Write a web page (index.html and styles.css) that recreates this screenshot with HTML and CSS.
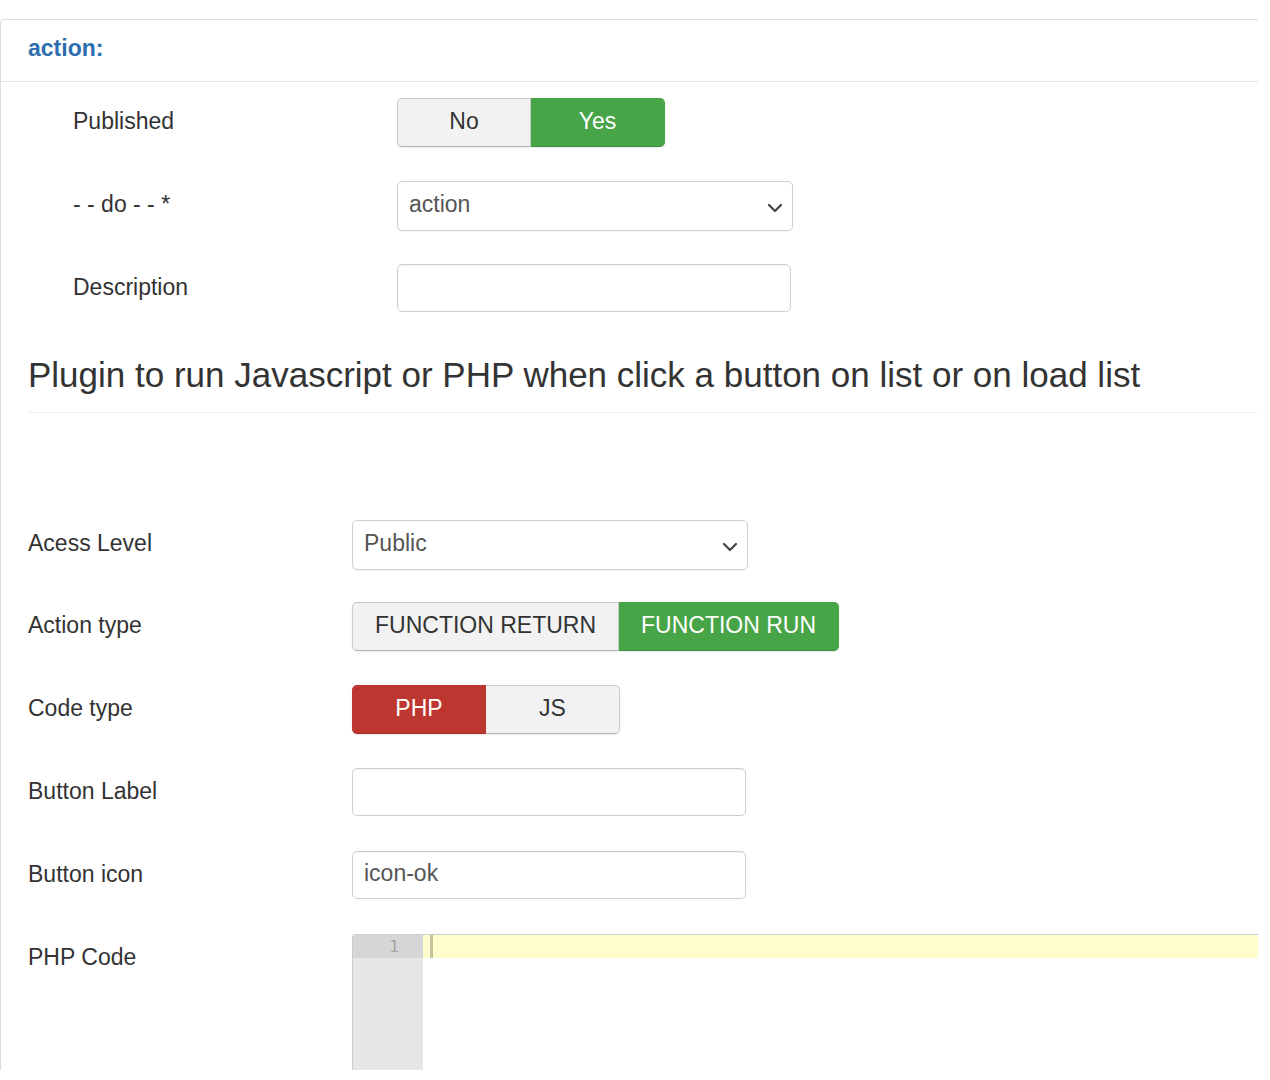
FILE: index.html
```html
<!DOCTYPE html>
<html>
<head>
<meta charset="utf-8">
<title>action</title>
<link rel="stylesheet" href="styles.css">
</head>
<body>
<div class="viewport">
  <div class="panel">
    <div class="panel-head"><span class="legend">action:</span></div>

    <div class="section section-indented">
      <div class="row">
        <div class="label">Published</div>
        <div class="btn-group">
          <span class="btn">No</span>
          <span class="btn btn-success">Yes</span>
        </div>
      </div>
      <div class="row">
        <div class="label">- - do - - *</div>
        <div class="select">
          <span>action</span>
          <svg class="chev" width="16" height="10" viewBox="0 0 16 10"><polyline points="2,2 8,8 14,2" fill="none" stroke="#444" stroke-width="2.2" stroke-linecap="round" stroke-linejoin="round"/></svg>
        </div>
      </div>
      <div class="row">
        <div class="label">Description</div>
        <div class="input"></div>
      </div>
    </div>

    <h2 class="page-header">Plugin to run Javascript or PHP when click a button on list or on load list</h2>

    <div class="section">
      <div class="row">
        <div class="label">Acess Level</div>
        <div class="select">
          <span>Public</span>
          <svg class="chev" width="16" height="10" viewBox="0 0 16 10"><polyline points="2,2 8,8 14,2" fill="none" stroke="#444" stroke-width="2.2" stroke-linecap="round" stroke-linejoin="round"/></svg>
        </div>
      </div>
      <div class="row">
        <div class="label">Action type</div>
        <div class="btn-group">
          <span class="btn">FUNCTION RETURN</span>
          <span class="btn btn-success">FUNCTION RUN</span>
        </div>
      </div>
      <div class="row">
        <div class="label">Code type</div>
        <div class="btn-group">
          <span class="btn btn-danger">PHP</span>
          <span class="btn">JS</span>
        </div>
      </div>
      <div class="row">
        <div class="label">Button Label</div>
        <div class="input"></div>
      </div>
      <div class="row">
        <div class="label">Button icon</div>
        <div class="input">icon-ok</div>
      </div>
      <div class="row">
        <div class="label">PHP Code</div>
        <div class="editor">
          <div class="gutter">
            <div class="gutter-line active">1</div>
          </div>
          <div class="code">
            <div class="code-line active"><span class="cursor"></span></div>
          </div>
        </div>
      </div>
    </div>
  </div>
</div>
</body>
</html>
```

FILE: styles.css
```css
* { box-sizing: border-box; }

html, body {
  margin: 0;
  padding: 0;
  background: #fff;
}

body {
  font-family: "Liberation Sans", Arial, Helvetica, sans-serif;
  color: #333;
}

.viewport {
  height: 1070px;
  overflow: hidden;
  padding-top: 19px;
}

.panel {
  width: 1258px;
  height: 1100px;
  border-top: 1px solid #ddd;
  border-left: 1px solid #ddd;
  border-top-left-radius: 4px;
  overflow: hidden;
}

.panel-head {
  height: 62px;
  border-bottom: 1px solid #e5e5e5;
  padding-left: 27px;
  display: flex;
  align-items: center;
}

.legend {
  font-weight: bold;
  font-size: 23px;
  color: #2c6ead;
  margin-top: -4px;
}

.section {
  padding-left: 27px;
}

.section-indented {
  padding-left: 72px;
  padding-top: 16px;
}

.row {
  display: grid;
  grid-template-columns: 324px 1fr;
  align-items: start;
  height: 49px;
  margin-bottom: 33.8px;
}

.label {
  font-size: 23px;
  line-height: 29px;
  padding-top: 9px;
  color: #333;
}

.btn-group {
  display: flex;
  width: max-content;
  height: 49px;
  border-radius: 5px;
  box-shadow: 0 1px 2px rgba(0, 0, 0, 0.08);
}

.btn {
  min-width: 134px;
  padding: 0 22px 3px;
  display: flex;
  align-items: center;
  justify-content: center;
  font-size: 23px;
  color: #333;
  background: #f2f2f2;
  border: 1px solid #cacaca;
  border-bottom-color: #b5b5b5;
}

.btn:first-child {
  border-radius: 5px 0 0 5px;
}

.btn:last-child {
  border-radius: 0 5px 5px 0;
  border-left: none;
}

.btn-success {
  background: #47a447;
  border-color: #47a447;
  color: #fff;
  border-bottom-color: #3d8f3d;
}

.btn-danger {
  background: #bd362f;
  border-color: #bd362f;
  color: #fff;
  border-bottom-color: #a52e28;
}

.select {
  width: 396px;
  height: 50px;
  border: 1px solid #cfcfcf;
  border-radius: 5px;
  padding: 0 9px 3px 11px;
  display: flex;
  align-items: center;
  justify-content: space-between;
  font-size: 23px;
  color: #555;
  box-shadow: 0 1px 1px rgba(0, 0, 0, 0.04);
}

.chev {
  margin-top: 8px;
}

.input {
  width: 394px;
  height: 48px;
  border: 1px solid #cfcfcf;
  border-radius: 5px;
  padding: 0 11px 3px 11px;
  display: flex;
  align-items: center;
  font-size: 23px;
  color: #555;
  box-shadow: inset 0 1px 1px rgba(0, 0, 0, 0.05);
}

.page-header {
  margin: 41px 0 107px 27px;
  padding-bottom: 17px;
  border-bottom: 1px solid #eee;
  font-size: 35px;
  line-height: 41px;
  font-weight: normal;
  color: #333;
}

.editor {
  width: 940px;
  height: 220px;
  border-top: 1px solid #cccccc;
  border-left: 1px solid #cccccc;
  border-top-left-radius: 4px;
  display: flex;
  overflow: hidden;
}

.gutter {
  width: 70px;
  background: #e6e6e6;
  flex: none;
}

.gutter-line {
  height: 23px;
  padding-right: 24px;
  text-align: right;
  font-family: "DejaVu Sans Mono", "Liberation Mono", monospace;
  font-size: 16px;
  line-height: 23px;
  color: #a3a3a3;
}

.gutter-line.active {
  background: #d6d6d6;
}

.code {
  flex: 1;
  background: #fff;
}

.code-line {
  height: 23px;
  padding-left: 7px;
  display: flex;
  align-items: stretch;
}

.code-line.active {
  background: #fffdcc;
}

.cursor {
  width: 3px;
  background: #c5c39d;
}
```
